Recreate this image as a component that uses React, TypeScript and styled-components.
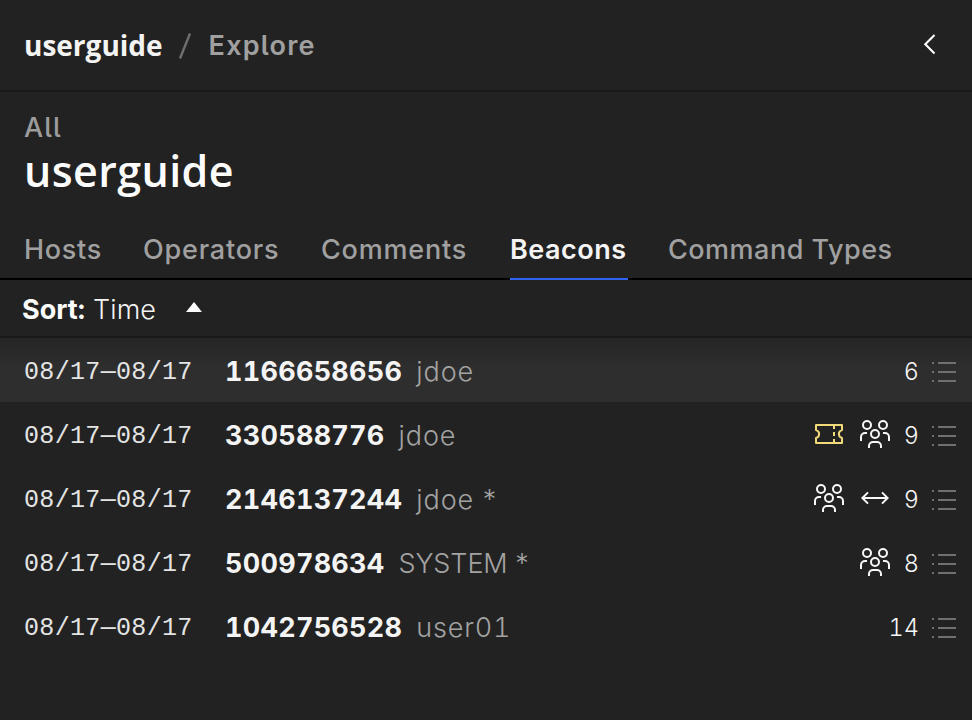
import React from "react";
import styled, { createGlobalStyle } from "styled-components";

const GlobalStyle = createGlobalStyle`
  * { box-sizing: border-box; }
  body { margin: 0; background: #222222; }
`;

const Panel = styled.main`
  width: 972px;
  height: 720px;
  overflow: hidden;
  background: #222222;
  color: #f4f4f4;
  font-family: Inter, "Noto Sans", sans-serif;
  font-size: 27px;
  font-feature-settings: "tnum", "cv05";
  display: flex;
  flex-direction: column;
`;

const Header = styled.header`
  height: 92px;
  flex: none;
  display: flex;
  align-items: center;
  justify-content: space-between;
  padding: 0 33px 2px 24px;
  border-bottom: 2px solid #191919;
`;

const Breadcrumbs = styled.nav`
  display: flex;
  align-items: center;
  white-space: nowrap;
`;

const Crumb = styled.span<{ $current?: boolean; $spacing: number }>`
  font-family: ${(p) => (p.$current ? "Inter" : '"Open Sans"')}, sans-serif;
  font-size: ${(p) => (p.$current ? 27 : 28)}px;
  font-weight: ${(p) => (p.$current ? 600 : 700)};
  line-height: 36px;
  padding-top: ${(p) => (p.$current ? 4 : 2)}px;
  letter-spacing: ${(p) => p.$spacing}px;
  color: ${(p) => (p.$current ? "#a0a0a0" : "#f4f4f4")};
`;

const Separator = styled.svg`
  width: 12px;
  height: 26px;
  margin: 4px 18px 0 16px;
`;

const CollapseButton = styled.button`
  width: 20px;
  height: 24px;
  padding: 0;
  border: 0;
  background: none;
  display: flex;
`;

const Title = styled.section`
  height: 128px;
  flex: none;
  padding: 18px 24px 0;
`;

const Scope = styled.div`
  line-height: 36px;
  font-weight: 500;
  letter-spacing: 1px;
  color: #9c9c9c;
`;

const Name = styled.h1`
  margin: 0;
  font-family: "Open Sans", sans-serif;
  font-size: 43px;
  font-weight: 600;
  line-height: 50px;
  letter-spacing: 0.4px;
  color: #ffffff;
`;

const Tabs = styled.nav`
  height: 60px;
  flex: none;
  display: flex;
  gap: 40px;
  padding-left: 24px;
  box-shadow: inset 0 -2px #000000;
`;

const Tab = styled.a<{ $active?: boolean; $width: number; $spacing: number }>`
  width: ${(p) => p.$width}px;
  line-height: 60px;
  font-weight: ${(p) => (p.$active ? 600 : 550)};
  letter-spacing: ${(p) => p.$spacing}px;
  white-space: nowrap;
  color: ${(p) => (p.$active ? "#f4f4f4" : "#a0a0a0")};
  border-bottom: 2px solid ${(p) => (p.$active ? "#2f62f2" : "transparent")};
`;

const SortBar = styled.div`
  height: 58px;
  flex: none;
  display: flex;
  align-items: center;
  padding: 2px 0 0 22px;
  white-space: nowrap;
  border-bottom: 2px solid #191919;
`;

const SortLabel = styled.strong`
  width: 71px;
  font-weight: 700;
  letter-spacing: 0;
  color: #ffffff;
`;

const SortValue = styled.span`
  width: 93px;
  font-weight: 300;
  letter-spacing: 0.1px;
`;

const Caret = styled.svg`
  width: 16px;
  height: 10px;
  margin-bottom: 4px;
`;

const Row = styled.div<{ $hovered?: boolean }>`
  height: 64px;
  flex: none;
  display: flex;
  align-items: center;
  padding: 0 15px 0 24px;
  white-space: nowrap;
  background: ${(p) =>
    p.$hovered ? "linear-gradient(#252525, #2e2e2e 30px)" : "transparent"};
`;

const Dates = styled.span`
  width: 201px;
  padding-top: 4px;
  font-family: "Liberation Mono", monospace;
  font-size: 25px;
  letter-spacing: 0.33px;
  color: #e4e4e4;
`;

const BeaconId = styled.strong`
  margin-right: 14px;
  padding-top: 2px;
  font-weight: 700;
  letter-spacing: 0.27px;
`;

const User = styled.span<{ $spacing: number }>`
  flex: 1;
  padding-top: 2px;
  font-weight: 300;
  letter-spacing: ${(p) => p.$spacing}px;
  word-spacing: -1.5px;
  color: #a3a3a3;
`;

const Markers = styled.span`
  display: flex;
  gap: 14px;
  margin-right: 13px;
`;

const MarkerIcon = styled.svg`
  width: 32px;
  height: 32px;
  fill: none;
  stroke: #f7f7f7;
  stroke-width: 2;
`;

const Count = styled.span`
  margin-right: 13px;
  padding-top: 2px;
  font-size: 23.5px;
  font-weight: 300;
  color: #f7f7f7;
`;

const ListIcon = styled.svg`
  width: 25px;
  height: 20px;
  margin-top: 4px;
`;

type Marker = "ticket" | "group" | "link";

function MarkerGlyph({ kind }: { kind: Marker }) {
  if (kind === "ticket") {
    return (
      <MarkerIcon viewBox="0 0 32 32">
        <g stroke="#f1d97a" strokeLinejoin="round">
          <path d="M3 7H29V12.1a4 4 0 0 0 0 7.8V25H3V19.9a4 4 0 0 0 0-7.8Z" />
          <path d="M21 8v3M21 14v4M21 21v3" />
        </g>
      </MarkerIcon>
    );
  }
  if (kind === "link") {
    return (
      <MarkerIcon viewBox="0 0 32 32">
        <path d="M3.5 16H28.5M9 10.4L3.4 16L9 21.6M23 10.4L28.6 16L23 21.6" />
      </MarkerIcon>
    );
  }
  return (
    <MarkerIcon viewBox="0 0 32 32">
      <circle cx="8" cy="7" r="4" />
      <circle cx="24" cy="7" r="4" />
      <circle cx="16" cy="16" r="4" />
      <path d="M2 23V19a4 4 0 0 1 4-4H8M30 23V19a4 4 0 0 0-4-4H24" />
      <path d="M10 30V28a4 4 0 0 1 4-4H18a4 4 0 0 1 4 4V30" />
    </MarkerIcon>
  );
}

const tabs = [
  { label: "Hosts", width: 79, spacing: 0.7 },
  { label: "Operators", width: 138, spacing: 0.8 },
  { label: "Comments", width: 149, spacing: 0.8 },
  { label: "Beacons", width: 118, spacing: 0.5, active: true },
  { label: "Command Types", width: 230, spacing: 0.5 },
];

const beacons: {
  id: string;
  user: string;
  spacing: number;
  count: number;
  markers: Marker[];
}[] = [
  { id: "1166658656", user: "jdoe", spacing: 0.9, count: 6, markers: [] },
  { id: "330588776", user: "jdoe", spacing: 0.9, count: 9, markers: ["ticket", "group"] },
  { id: "2146137244", user: "jdoe *", spacing: 0.9, count: 9, markers: ["group", "link"] },
  { id: "500978634", user: "SYSTEM *", spacing: -0.1, count: 8, markers: ["group"] },
  { id: "1042756528", user: "user01", spacing: 0.8, count: 14, markers: [] },
];

export default function App() {
  return (
    <Panel>
      <GlobalStyle />
      <Header>
        <Breadcrumbs>
          <Crumb $spacing={0}>userguide</Crumb>
          <Separator viewBox="0 0 12 26">
            <path d="M11 0.5L1 25.5" stroke="#6f6f6f" strokeWidth="2.4" />
          </Separator>
          <Crumb $current $spacing={1.2}>Explore</Crumb>
        </Breadcrumbs>
        <CollapseButton aria-label="Collapse">
          <svg width="20" height="24" viewBox="0 0 20 24">
            <path d="M15.5 3L6.3 12.2L15.5 21.4" fill="none" stroke="#fff" strokeWidth="2.1" />
          </svg>
        </CollapseButton>
      </Header>
      <Title>
        <Scope>All</Scope>
        <Name>userguide</Name>
      </Title>
      <Tabs>
        {tabs.map((t) => (
          <Tab key={t.label} $active={t.active} $width={t.width} $spacing={t.spacing}>
            {t.label}
          </Tab>
        ))}
      </Tabs>
      <SortBar>
        <SortLabel>Sort:</SortLabel>
        <SortValue>Time</SortValue>
        <Caret viewBox="0 0 16 10">
          <path d="M0 10L8 0L16 10Z" fill="#fff" />
        </Caret>
      </SortBar>
      {beacons.map((b, i) => (
        <Row key={b.id} $hovered={i === 0}>
          <Dates>08/17—08/17</Dates>
          <BeaconId>{b.id}</BeaconId>
          <User $spacing={b.spacing}>{b.user}</User>
          <Markers>
            {b.markers.map((m) => (
              <MarkerGlyph key={m} kind={m} />
            ))}
          </Markers>
          <Count>{b.count}</Count>
          <ListIcon viewBox="0 0 25 20">
            <path
              d="M0 2h2M6 2h18M0 11h2M6 11h18M0 20h2M6 20h18"
              transform="translate(0 -1)"
              stroke="#707070"
              strokeWidth="2"
            />
          </ListIcon>
        </Row>
      ))}
    </Panel>
  );
}
